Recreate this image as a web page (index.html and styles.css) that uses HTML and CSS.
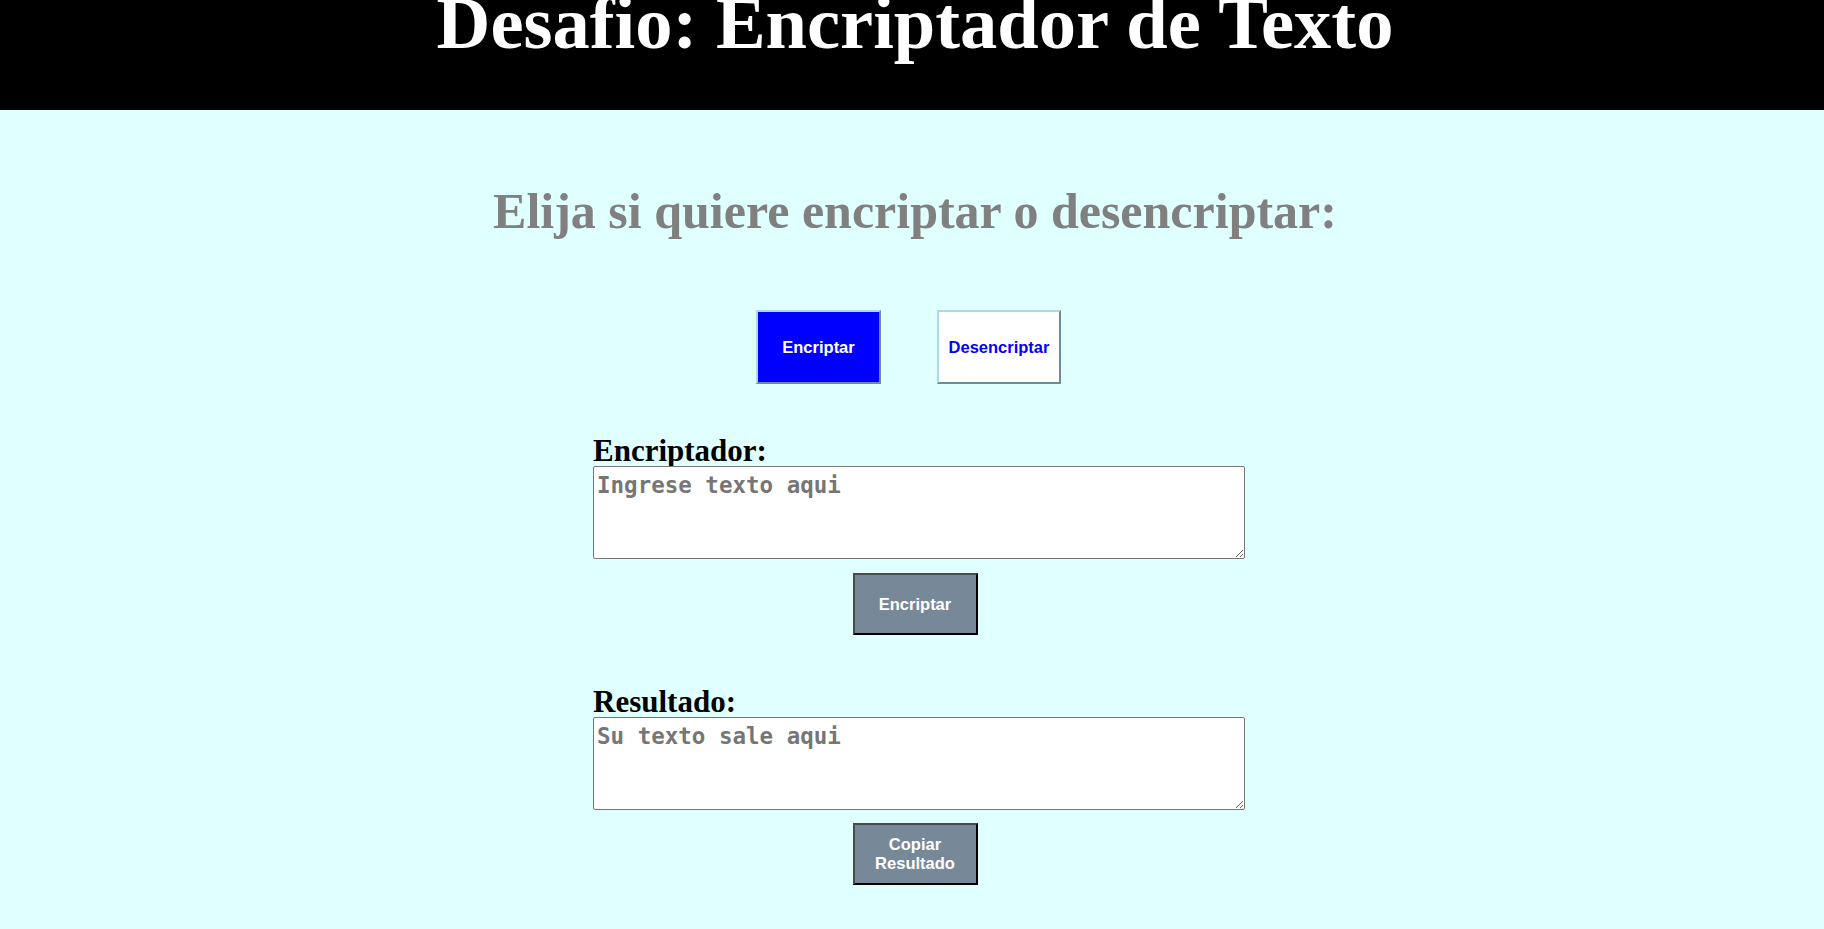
FILE: index.html
```html
<!DOCTYPE html>
<html lang="es">
<head>
<meta charset="utf-8">
<title>Desafio: Encriptador de Texto</title>
<link rel="stylesheet" href="styles.css">
</head>
<body>
<header class="topbar">
  <h1 class="title">Desafio: Encriptador de Texto</h1>
</header>
<main class="main">
  <h2 class="prompt">Elija si quiere encriptar o desencriptar:</h2>
  <div class="modes">
    <button class="mode mode-active" type="button">Encriptar</button>
    <button class="mode" type="button">Desencriptar</button>
  </div>
  <section class="form">
    <label class="field-label" for="entrada">Encriptador:</label>
    <textarea id="entrada" class="field" placeholder="Ingrese texto aqui"></textarea>
    <button class="action" type="button">Encriptar</button>
    <label class="field-label field-label-next" for="salida">Resultado:</label>
    <textarea id="salida" class="field" placeholder="Su texto sale aqui"></textarea>
    <button class="action action-last" type="button">Copiar Resultado</button>
  </section>
</main>
</body>
</html>
```
FILE: styles.css
```css
* {
  box-sizing: border-box;
}

body {
  margin: 0;
  background: #e0ffff;
  font-family: "Liberation Serif", "Times New Roman", serif;
}

.topbar {
  background: #000;
  height: 110px;
  overflow: hidden;
}

.title {
  margin: 0;
  padding-left: 6px;
  color: #fff;
  font-size: 74.5px;
  font-weight: bold;
  line-height: 46px;
  text-align: center;
}

.main {
  display: flex;
  flex-direction: column;
  align-items: center;
}

.prompt {
  margin: 73px 0 0;
  padding-left: 6px;
  color: #808080;
  font-size: 50px;
  font-weight: bold;
  line-height: 56px;
}

.modes {
  display: flex;
  gap: 56px;
  margin: 71px 7px 0 0;
}

.mode {
  width: 124px;
  height: 74px;
  padding: 0;
  border: 2px solid;
  border-color: #add8e6 #6f8b95 #6f8b95 #add8e6;
  background: #fff;
  color: #00f;
  font: bold 16.5px "Liberation Sans", Arial, sans-serif;
}

.mode-active {
  width: 125px;
  background: #00f;
  color: #fff;
}

.form {
  display: flex;
  flex-direction: column;
  width: 652px;
  margin: 52px 0 0 14px;
}

.field-label {
  color: #000;
  font-size: 31px;
  font-weight: bold;
  line-height: 30px;
}

.field-label-next {
  margin-top: 52px;
}

.field {
  display: block;
  width: 652px;
  height: 93px;
  padding: 5px 2px 2px 3px;
  border: 1px solid #767676;
  border-radius: 2px;
  background: #fff;
  font: bold 22.5px "DejaVu Sans Mono", monospace;
}

.field::placeholder {
  color: #767676;
}

.action {
  align-self: center;
  width: 125px;
  height: 62px;
  margin: 14px 8px 0 0;
  padding: 0 8px;
  border: 2px solid;
  border-color: #4a4a4a #000 #000 #4a4a4a;
  background: #778899;
  color: #fff;
  font: bold 16.5px "Liberation Sans", Arial, sans-serif;
}

.action-last {
  margin-top: 13px;
}
```
